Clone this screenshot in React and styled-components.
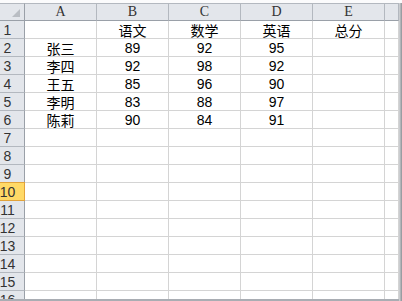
import React from "react";
import styled, { createGlobalStyle } from "styled-components";

const gridLine = "#d4d4d4";
const headBg = "#e3e6eb";
const headLine = "#b3b8bf";

const GlobalStyle = createGlobalStyle`
  html, body {
    margin: 0;
    padding: 0;
    background: #ffffff;
    overflow: hidden;
  }
`;

const Screen = styled.div`
  width: 402px;
  height: 301px;
  display: flex;
  flex-direction: column;
  overflow: hidden;
  background: #fff;
`;

const TopGap = styled.div`
  height: 3px;
  flex: none;
  background: #fbfbfc;
`;

const Body = styled.div`
  display: flex;
  flex: 1;
  min-height: 0;
`;

const Sheet = styled.div`
  flex: 1;
  display: grid;
  grid-template-columns: 25px repeat(5, 72px) 1fr;
  grid-auto-rows: 18px;
  overflow: hidden;
  align-content: start;
  border-bottom: 2px solid #a9adb3;
`;

const RightEdge = styled.div`
  width: 3px;
  flex: none;
  background: linear-gradient(to right, #d6d8db, #8d9196);
`;

const Cell = styled.div`
  box-sizing: border-box;
  border-right: 1px solid ${gridLine};
  border-bottom: 1px solid ${gridLine};
  display: flex;
  align-items: center;
  justify-content: center;
  font-family: "Liberation Sans", "Noto Sans CJK SC", sans-serif;
  font-size: 14px;
  line-height: 1;
  color: #000;
  white-space: nowrap;
  overflow: hidden;
`;

const TextCell = styled(Cell)`
  font-family: "Noto Sans CJK SC", sans-serif;
  font-size: 14px;
  padding-top: 1px;
`;

const ColHead = styled(Cell)`
  background: ${headBg};
  border-top: 1px solid ${headLine};
  border-right-color: ${headLine};
  border-bottom-color: #9aa0a8;
  font-family: "Liberation Serif", serif;
  font-size: 14px;
  color: #333;
`;

const Corner = styled(ColHead)`
  justify-content: flex-end;
  align-items: flex-end;
  padding: 0 4px 3px 0;
  border-right-color: #9aa0a8;
`;

const RowHead = styled(Cell)`
  background: ${(p) => (p.$active ? "#ffd966" : headBg)};
  border-right: 1px solid ${(p) => (p.$active ? "#e2a33a" : "#9aa0a8")};
  border-bottom-color: ${(p) => (p.$active ? "#e2a33a" : headLine)};
  border-top: ${(p) => (p.$active ? "1px solid #e2a33a" : "none")};
  margin-top: ${(p) => (p.$active ? "-1px" : "0")};
  height: ${(p) => (p.$active ? "19px" : "auto")};
  padding-right: 9px;
  font-size: 14px;
  color: #333;
`;

const cols = ["A", "B", "C", "D", "E"];

const data = [
  ["", "语文", "数学", "英语", "总分"],
  ["张三", "89", "92", "95", ""],
  ["李四", "92", "98", "92", ""],
  ["王五", "85", "96", "90", ""],
  ["李明", "83", "88", "97", ""],
  ["陈莉", "90", "84", "91", ""],
];

const isText = (s) => /[^\d]/.test(s);

export default function App() {
  const rows = [];
  for (let r = 1; r <= 16; r++) {
    const vals = data[r - 1] || ["", "", "", "", ""];
    rows.push(
      <React.Fragment key={r}>
        <RowHead $active={r === 10}>{r}</RowHead>
        {vals.map((v, i) =>
          isText(v) ? (
            <TextCell key={i}>{v}</TextCell>
          ) : (
            <Cell key={i}>{v}</Cell>
          )
        )}
        <Cell />
      </React.Fragment>
    );
  }

  return (
    <Screen>
      <GlobalStyle />
      <TopGap />
      <Body>
        <Sheet>
          <Corner>
            <svg width="8" height="8" viewBox="0 0 8 8">
              <polygon points="8,0 8,8 0,8" fill="#b9bdc3" />
            </svg>
          </Corner>
          {cols.map((c) => (
            <ColHead key={c}>{c}</ColHead>
          ))}
          <ColHead />
          {rows}
        </Sheet>
        <RightEdge />
      </Body>
    </Screen>
  );
}
